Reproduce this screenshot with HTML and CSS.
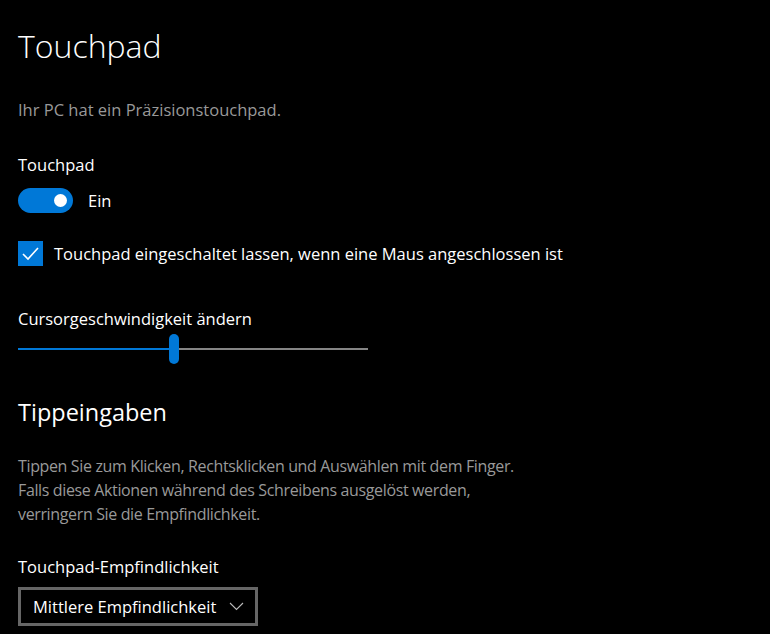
FILE: index.html
```html
<!DOCTYPE html>
<html lang="de">
<head>
    <meta charset="UTF-8">
    <meta name="viewport" content="width=device-width, initial-scale=1.0">
    <title>Touchpad</title>
    <link rel="stylesheet" href="styles.css">
</head>
<body>
    <div class="page">
        <h1>Touchpad</h1>
        <p class="note">Ihr PC hat ein Präzisionstouchpad.</p>

        <div class="label first-label">Touchpad</div>
        <div class="toggle-row">
            <span class="toggle"><span class="knob"></span></span>
            <span>Ein</span>
        </div>

        <div class="check-row">
            <span class="checkbox">
                <svg width="25" height="25" viewBox="0 0 25 25">
                    <path d="M5 13 L10 18 L20 7" fill="none" stroke="#fff" stroke-width="1.6"/>
                </svg>
            </span>
            <span>Touchpad eingeschaltet lassen, wenn eine Maus angeschlossen ist</span>
        </div>

        <div class="label slider-label">Cursorgeschwindigkeit ändern</div>
        <div class="slider">
            <div class="track-on"></div>
            <div class="thumb"></div>
            <div class="track-off"></div>
        </div>

        <h2>Tippeingaben</h2>
        <p class="note desc">Tippen Sie zum Klicken, Rechtsklicken und Auswählen mit dem Finger.<br>
            Falls diese Aktionen während des Schreibens ausgelöst werden,<br>
            verringern Sie die Empfindlichkeit.</p>

        <div class="label combo-label">Touchpad-Empfindlichkeit</div>
        <div class="combo">
            <span>Mittlere Empfindlichkeit</span>
            <svg width="15" height="9" viewBox="0 0 15 9">
                <path d="M1 1 L7.5 7.5 L14 1" fill="none" stroke="#bbb" stroke-width="1.1"/>
            </svg>
        </div>
    </div>
</body>
</html>
```

FILE: styles.css
```css
body {
    margin: 0;
    background-color: #000;
    color: #fff;
    font-family: "Open Sans", sans-serif;
    font-size: 16.5px;
}
.page {
    padding: 25px 18px 0 18px;
}
h1 {
    margin: 0;
    font-size: 32px;
    font-weight: 300;
    line-height: 42px;
}
h2 {
    margin: 32px 0 0 0;
    font-size: 23.5px;
    font-weight: 400;
    line-height: 32px;
}
p {
    margin: 0;
}
.note {
    margin-top: 31px;
    color: #999;
    line-height: 24px;
}
.label {
    line-height: 24px;
}
.first-label {
    margin-top: 31px;
}
.toggle-row {
    display: flex;
    align-items: center;
    gap: 15px;
    margin-top: 11px;
    height: 25px;
}
.toggle {
    display: flex;
    align-items: center;
    justify-content: flex-end;
    width: 55px;
    height: 25px;
    padding-right: 6px;
    box-sizing: border-box;
    background-color: #0078d7;
    border-radius: 13px;
}
.knob {
    width: 13px;
    height: 13px;
    border-radius: 50%;
    background-color: #fff;
}
.check-row {
    display: flex;
    align-items: center;
    gap: 11px;
    margin-top: 28px;
    height: 25px;
}
.checkbox {
    display: block;
    width: 25px;
    height: 25px;
    background-color: #0078d7;
}
.checkbox svg {
    display: block;
}
.slider-label {
    margin-top: 41px;
}
.slider {
    display: flex;
    align-items: center;
    width: 350px;
    height: 30px;
    margin-top: 3px;
}
.track-on {
    width: 151px;
    height: 2px;
    background-color: #0078d7;
}
.thumb {
    width: 10px;
    height: 30px;
    border-radius: 5px;
    background-color: #0078d7;
}
.track-off {
    flex: 1;
    height: 2px;
    background-color: #858585;
}
.desc {
    margin-top: 26px;
    font-size: 16px;
    letter-spacing: -0.36px;
}
.combo-label {
    margin-top: 29px;
}
.combo {
    display: flex;
    align-items: center;
    justify-content: space-between;
    width: 240px;
    height: 39px;
    margin-top: 8px;
    padding: 0 11px 0 12px;
    box-sizing: border-box;
    border: 3px solid #666;
}
```
